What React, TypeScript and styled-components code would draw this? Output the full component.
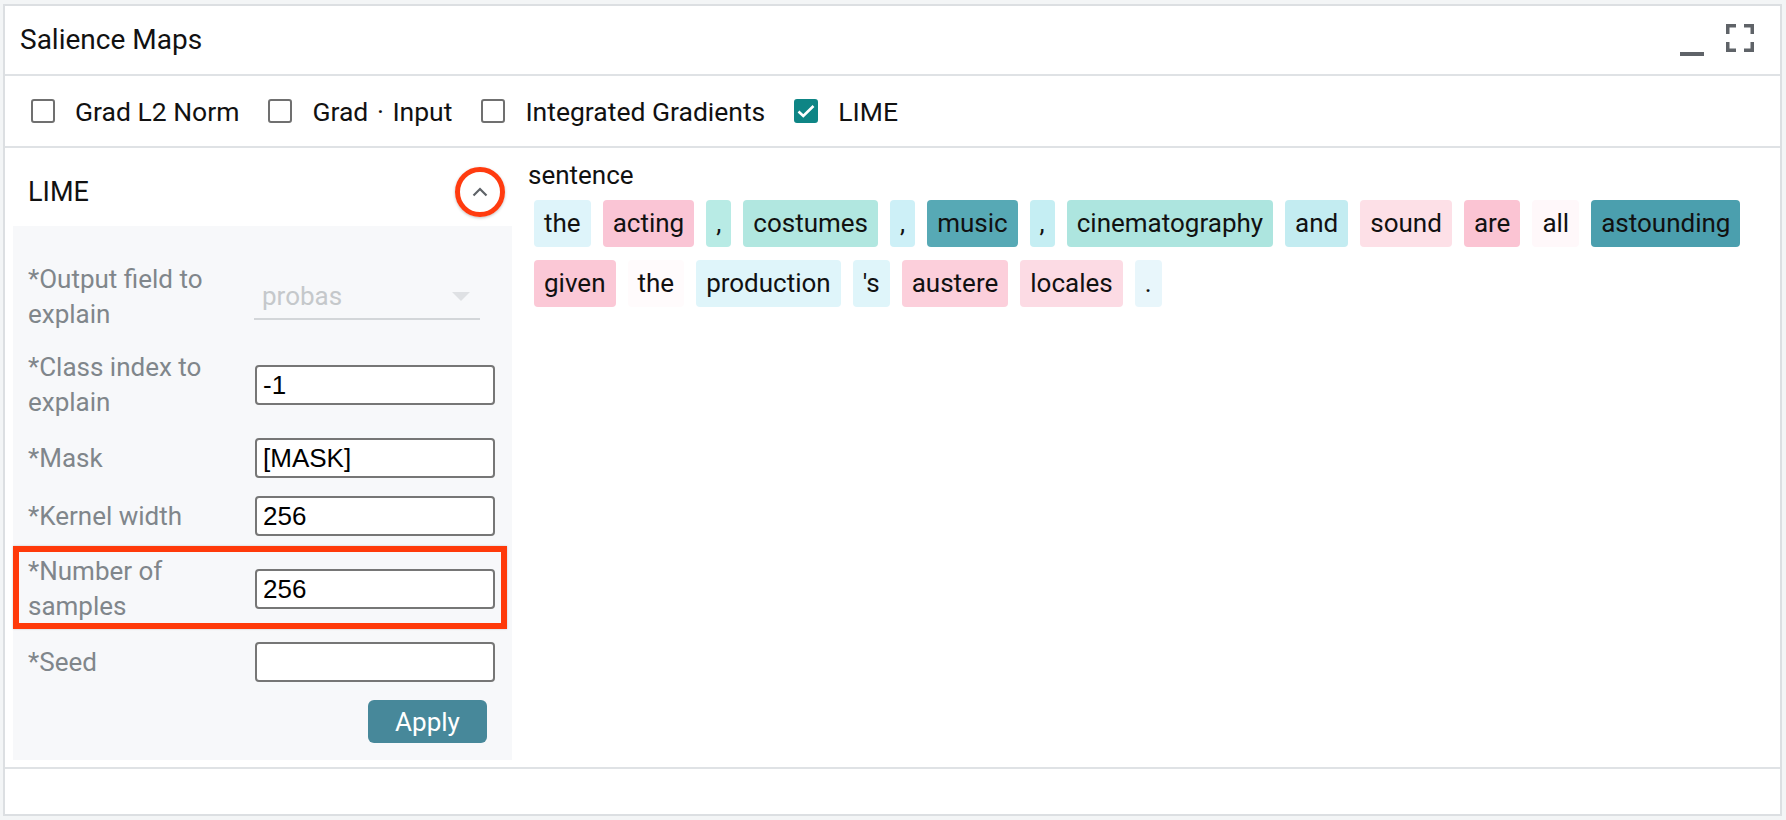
import React from 'react';
import styled, { createGlobalStyle } from 'styled-components';

const GlobalStyle = createGlobalStyle`
  html, body { margin: 0; padding: 0; background: #f3f5f6; }
  body { font-family: Roboto, "Noto Sans", sans-serif; color: #111; }
  * { box-sizing: border-box; }
`;

const Frame = styled.div`
  margin: 4px 0 0 3px;
  width: 1779px;
  height: 812px;
  border: 2px solid #dcdfe2;
  background: #fff;
  display: flex;
  flex-direction: column;
`;

const Header = styled.div`
  height: 70px;
  flex: none;
  border-bottom: 2px solid #dfe2e5;
  display: flex;
  align-items: center;
  justify-content: space-between;
  padding: 0 26px 0 15px;
`;

const Title = styled.div`
  font-size: 28px;
  line-height: 36px;
  color: #111;
`;

const IconGroup = styled.div`
  display: flex;
  align-items: flex-start;
  gap: 22px;
  color: #5f6368;
`;

const MethodRow = styled.div`
  height: 72px;
  flex: none;
  border-bottom: 2px solid #dfe2e5;
  display: flex;
  align-items: center;
  padding-left: 26px;
`;

const CheckItem = styled.label`
  display: flex;
  align-items: center;
  margin-right: 29px;
  font-size: 26.5px;
  line-height: 35px;
  color: #111;
`;

const CheckLabel = styled.span`
  white-space: nowrap;
`;

const Dot = styled.span`
  margin: 0 2px;
`;

const Box = styled.span<{ $checked?: boolean }>`
  width: 24px;
  height: 24px;
  margin-right: 20px;
  border-radius: 3px;
  border: 2px solid ${(p) => (p.$checked ? '#0e8585' : '#707070')};
  background: ${(p) => (p.$checked ? '#0e8585' : '#fff')};
  display: flex;
  align-items: center;
  justify-content: center;
`;

const Body = styled.div`
  height: 621px;
  flex: none;
  border-bottom: 2px solid #dfe2e5;
  display: flex;
`;

const LeftPanel = styled.div`
  width: 515px;
  flex: none;
  padding: 0 8px;
  display: flex;
  flex-direction: column;
`;

const PanelHeader = styled.div`
  height: 78px;
  flex: none;
  display: flex;
  align-items: center;
  justify-content: space-between;
  padding: 10px 16px 0 15px;
  font-size: 27px;
  color: #111;
`;

const CollapseButton = styled.div`
  position: relative;
  width: 32px;
  height: 32px;
  display: flex;
  align-items: center;
  justify-content: center;
  color: #5f6368;
`;

const RedCircle = styled.div`
  position: absolute;
  left: 50%;
  top: 50%;
  width: 50px;
  height: 50px;
  transform: translate(-50%, -50%);
  border: 5px solid #ff3b0f;
  border-radius: 50%;
  box-shadow: 0 1px 3px rgba(0, 0, 0, 0.25);
`;

const Controls = styled.div`
  flex: none;
  height: 534px;
  background: #f7f8fa;
  padding: 36px 17px 17px 15px;
  display: flex;
  flex-direction: column;
  gap: 18px;
`;

const FieldRow = styled.div`
  position: relative;
  display: flex;
  align-items: center;
`;

const FieldLabel = styled.div`
  width: 227px;
  flex: none;
  font-size: 26px;
  line-height: 35px;
  color: #80868b;
`;

const TextInput = styled.input`
  width: 240px;
  height: 40px;
  border: 2px solid #767676;
  border-radius: 4px;
  background: #fff;
  padding: 0 6px;
  font-family: "Liberation Sans", Arial, sans-serif;
  font-size: 26px;
  color: #000;
  outline: none;
`;

const SelectBox = styled.div`
  position: relative;
  width: 226px;
  height: 46px;
  margin-left: -1px;
  border-bottom: 2px solid #d3d6d9;
  display: flex;
  align-items: center;
  justify-content: space-between;
  padding: 0 10px 0 8px;
  font-size: 26px;
  color: #c5c8cb;
`;

const RedRect = styled.div`
  position: absolute;
  left: -15px;
  right: -12px;
  top: -8px;
  bottom: -5px;
  border: 6px solid #ff3a0a;
  box-shadow: 0 0 2px rgba(0, 0, 0, 0.2);
  pointer-events: none;
`;

const ApplyButton = styled.button`
  align-self: flex-end;
  margin-right: 8px;
  width: 119px;
  height: 43px;
  border: none;
  border-radius: 6px;
  background: #47889a;
  color: #fff;
  font-family: Roboto, sans-serif;
  font-size: 26px;
  padding: 0;
`;

const RightPanel = styled.div`
  flex: 1;
  padding: 10px 8px 0 8px;
  display: flex;
  flex-direction: column;
`;

const FieldName = styled.div`
  font-size: 26px;
  line-height: 35px;
  color: #111;
`;

const Tokens = styled.div`
  margin: 7px 0 0 6px;
  display: flex;
  flex-wrap: wrap;
  gap: 13px 12px;
`;

const Token = styled.span<{ $bg: string }>`
  display: inline-block;
  padding: 6px 10px;
  border-radius: 4px;
  background: ${(p) => p.$bg};
  font-size: 26px;
  line-height: 35px;
  color: #111;
`;

const Footer = styled.div`
  flex: 1;
`;

const tokens: [string, string][] = [
  ['the', '#def4fa'],
  ['acting', '#fac5d5'],
  [',', '#b8ebe5'],
  ['costumes', '#b1e7e0'],
  [',', '#cdf0f7'],
  ['music', '#57a9b5'],
  [',', '#c5eef3'],
  ['cinematography', '#ade5df'],
  ['and', '#c3ecf1'],
  ['sound', '#fde0e7'],
  ['are', '#fbc4d3'],
  ['all', '#fff8fa'],
  ['astounding', '#4b9fae'],
  ['given', '#fbc8d6'],
  ['the', '#fffbfc'],
  ['production', '#dff5fa'],
  ["'s", '#dff5fa'],
  ['austere', '#fccfdb'],
  ['locales', '#fcdbe4'],
  ['.', '#e8f6fb'],
];

const MinimizeIcon = () => (
  <svg width="24" height="32" viewBox="0 0 24 32">
    <rect x="0" y="28" width="24" height="4" fill="currentColor" />
  </svg>
);

const FullscreenIcon = () => (
  <svg width="28" height="28" viewBox="0 0 28 28" fill="none" stroke="currentColor" strokeWidth="3.5">
    <path d="M1.75 10V1.75H10M18 1.75h8.25V10M26.25 18v8.25H18M10 26.25H1.75V18" />
  </svg>
);

const ChevronUp = () => (
  <svg width="16" height="10" viewBox="0 0 16 10" fill="none" stroke="currentColor" strokeWidth="2.2">
    <path d="M1.5 8.5L8 2l6.5 6.5" />
  </svg>
);

const CheckMark = () => (
  <svg width="18" height="14" viewBox="0 0 18 14" fill="none" stroke="#fff" strokeWidth="2.6">
    <path d="M1.5 7.5l4.8 4.5L16.5 2" />
  </svg>
);

const Arrow = () => (
  <svg width="18" height="9" viewBox="0 0 18 9">
    <path d="M0 0h18L9 9z" fill="#dfe1e4" />
  </svg>
);

export default function App() {
  return (
    <>
      <GlobalStyle />
      <Frame>
        <Header>
          <Title>Salience Maps</Title>
          <IconGroup>
            <MinimizeIcon />
            <FullscreenIcon />
          </IconGroup>
        </Header>
        <MethodRow>
          <CheckItem>
            <Box />
            <CheckLabel>Grad L2 Norm</CheckLabel>
          </CheckItem>
          <CheckItem>
            <Box />
            <CheckLabel>
              Grad <Dot>·</Dot> Input
            </CheckLabel>
          </CheckItem>
          <CheckItem>
            <Box />
            <CheckLabel>Integrated Gradients</CheckLabel>
          </CheckItem>
          <CheckItem>
            <Box $checked>
              <CheckMark />
            </Box>
            <CheckLabel>LIME</CheckLabel>
          </CheckItem>
        </MethodRow>
        <Body>
          <LeftPanel>
            <PanelHeader>
              LIME
              <CollapseButton>
                <ChevronUp />
                <RedCircle />
              </CollapseButton>
            </PanelHeader>
            <Controls>
              <FieldRow>
                <FieldLabel>*Output field to explain</FieldLabel>
                <SelectBox>
                  probas
                  <Arrow />
                </SelectBox>
              </FieldRow>
              <FieldRow>
                <FieldLabel>*Class index to explain</FieldLabel>
                <TextInput defaultValue="-1" />
              </FieldRow>
              <FieldRow>
                <FieldLabel>*Mask</FieldLabel>
                <TextInput defaultValue="[MASK]" />
              </FieldRow>
              <FieldRow>
                <FieldLabel>*Kernel width</FieldLabel>
                <TextInput defaultValue="256" />
              </FieldRow>
              <FieldRow>
                <FieldLabel>*Number of samples</FieldLabel>
                <TextInput defaultValue="256" />
                <RedRect />
              </FieldRow>
              <FieldRow>
                <FieldLabel>*Seed</FieldLabel>
                <TextInput defaultValue="" />
              </FieldRow>
              <ApplyButton>Apply</ApplyButton>
            </Controls>
          </LeftPanel>
          <RightPanel>
            <FieldName>sentence</FieldName>
            <Tokens>
              {tokens.map(([t, bg], i) => (
                <Token key={i} $bg={bg}>
                  {t}
                </Token>
              ))}
            </Tokens>
          </RightPanel>
        </Body>
        <Footer />
      </Frame>
    </>
  );
}
